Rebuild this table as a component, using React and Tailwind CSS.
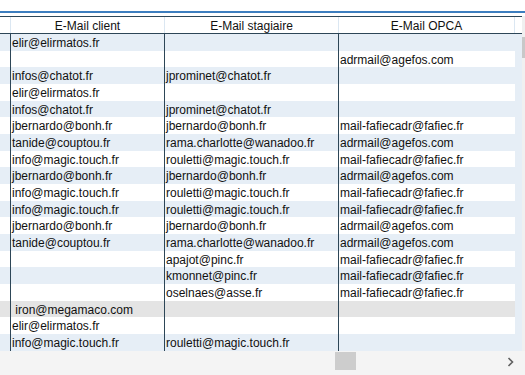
import React from 'react';

const ROWS = [
  { client: 'elir@elirmatos.fr', stagiaire: '', opca: '' },
  { client: '', stagiaire: '', opca: 'adrmail@agefos.com' },
  { client: 'infos@chatot.fr', stagiaire: 'jprominet@chatot.fr', opca: '' },
  { client: 'elir@elirmatos.fr', stagiaire: '', opca: '' },
  { client: 'infos@chatot.fr', stagiaire: 'jprominet@chatot.fr', opca: '' },
  { client: 'jbernardo@bonh.fr', stagiaire: 'jbernardo@bonh.fr', opca: 'mail-fafiecadr@fafiec.fr' },
  { client: 'tanide@couptou.fr', stagiaire: 'rama.charlotte@wanadoo.fr', opca: 'adrmail@agefos.com' },
  { client: 'info@magic.touch.fr', stagiaire: 'rouletti@magic.touch.fr', opca: 'mail-fafiecadr@fafiec.fr' },
  { client: 'jbernardo@bonh.fr', stagiaire: 'jbernardo@bonh.fr', opca: 'adrmail@agefos.com' },
  { client: 'info@magic.touch.fr', stagiaire: 'rouletti@magic.touch.fr', opca: 'mail-fafiecadr@fafiec.fr' },
  { client: 'info@magic.touch.fr', stagiaire: 'rouletti@magic.touch.fr', opca: 'mail-fafiecadr@fafiec.fr' },
  { client: 'jbernardo@bonh.fr', stagiaire: 'jbernardo@bonh.fr', opca: 'adrmail@agefos.com' },
  { client: 'tanide@couptou.fr', stagiaire: 'rama.charlotte@wanadoo.fr', opca: 'adrmail@agefos.com' },
  { client: '', stagiaire: 'apajot@pinc.fr', opca: 'mail-fafiecadr@fafiec.fr' },
  { client: '', stagiaire: 'kmonnet@pinc.fr', opca: 'mail-fafiecadr@fafiec.fr' },
  { client: '', stagiaire: 'oselnaes@asse.fr', opca: 'mail-fafiecadr@fafiec.fr' },
  { client: '\u00a0iron@megamaco.com', stagiaire: '', opca: '', selected: true },
  { client: 'elir@elirmatos.fr', stagiaire: '', opca: '' },
  { client: 'info@magic.touch.fr', stagiaire: 'rouletti@magic.touch.fr', opca: '' },
];

const rowBg = (row, index) => {
  if (row.selected) return 'bg-[#e4e4e4]';
  return index % 2 === 0 ? 'bg-[#e6eef6]' : 'bg-white';
};

const App = () => {
  return (
    <div className="flex h-[375px] w-[525px] flex-col overflow-hidden bg-white font-['Liberation_Sans',Arial,sans-serif] text-[12px] leading-none text-[#111]">
      <div className="h-[11px] shrink-0" />
      <div className="h-[2px] shrink-0 bg-[#3d7ebf]" />
      <div className="h-[3px] shrink-0" />

      <div className="flex min-h-0 flex-1">
        <div className="flex w-[522px] flex-col">
          {/* header */}
          <div className="flex h-[18px] shrink-0 border-y border-[#2d4657] bg-white">
            <div className="w-[11px] border-r border-[#dbe7f2]" />
            <div className="flex w-[154px] items-center justify-center border-r border-[#dbe7f2] pt-[1px]">E-Mail client</div>
            <div className="flex w-[174px] items-center justify-center border-r border-[#dbe7f2] pt-[1px]">E-Mail stagiaire</div>
            <div className="flex w-[176px] items-center justify-center border-r border-[#dbe7f2] pt-[1px]">E-Mail OPCA</div>
            <div className="flex-1" />
          </div>

          {/* body */}
          <div className="flex-1 bg-[#e6eef6]">
            {ROWS.map((row, index) => (
              <div key={index} className={`flex h-[16.68px] w-[515px] ${rowBg(row, index)}`}>
                <div className="w-[11px] border-r border-[#2d4657]" />
                <div className="flex w-[154px] items-center overflow-hidden whitespace-nowrap border-r border-[#2d4657] pl-[1px] pt-[1px]">{row.client}</div>
                <div className="flex w-[174px] items-center overflow-hidden whitespace-nowrap border-r border-[#2d4657] pl-[1px] pt-[1px]">{row.stagiaire}</div>
                <div className="flex w-[176px] items-center overflow-hidden whitespace-nowrap pl-[1px] pt-[1px]">{row.opca}</div>
              </div>
            ))}
          </div>
        </div>

        {/* vertical scrollbar (cut off) */}
        <div className="flex w-[3px] flex-col bg-[#f0f0f0]">
          <div className="h-[21px]" />
          <div className="h-[21px] bg-[#c8c8c8]" />
        </div>
      </div>

      {/* horizontal scrollbar */}
      <div className="flex h-[24px] shrink-0 items-start bg-[#f4f4f4]">
        <div className="ml-[335px] mt-[1px] h-[18px] w-[21px] bg-[#cdcdcd]" />
        <div className="ml-auto mr-[11px] mt-[6px]">
          <svg width="7" height="10" viewBox="0 0 7 10" fill="none">
            <path d="M1.5 1 L5.5 5 L1.5 9" stroke="#616161" strokeWidth="1.6" />
          </svg>
        </div>
      </div>
    </div>
  );
};

export default App;
